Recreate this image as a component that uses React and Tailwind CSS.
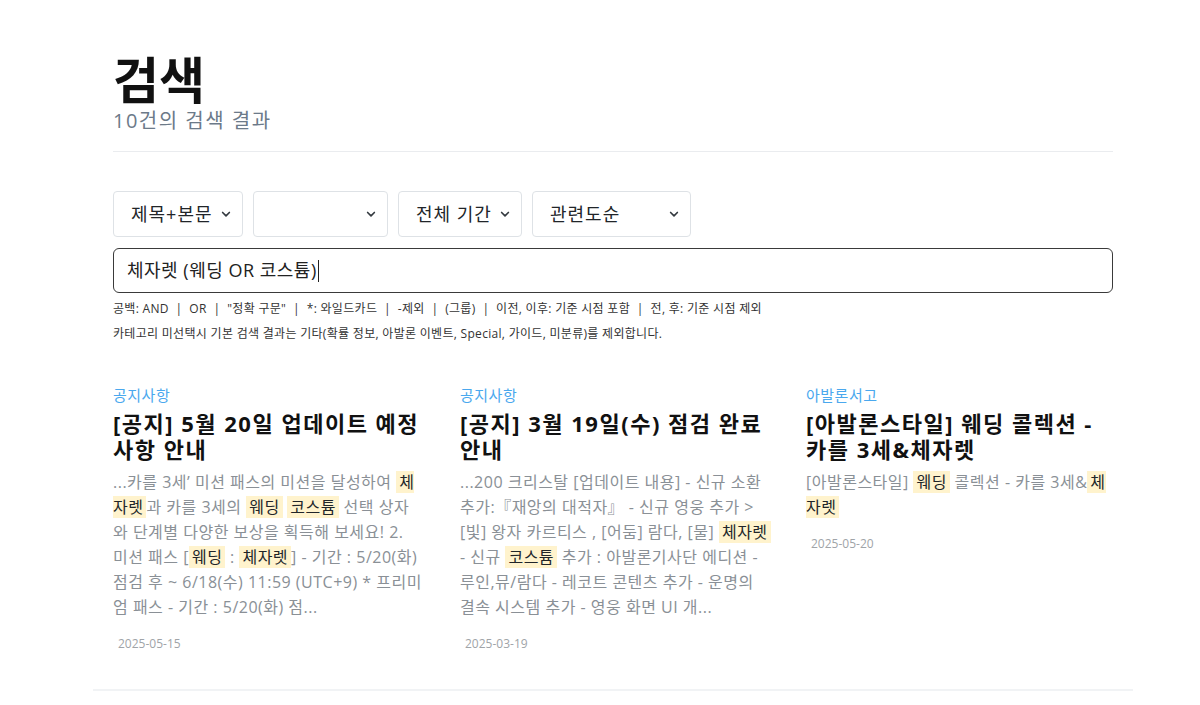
import React from 'react';

const FONT = { fontFamily: '"Open Sans", "Noto Sans CJK KR", sans-serif' };

const results = [
  {
    category: '공지사항',
    title: '[공지] 5월 20일 업데이트 예정 사항 안내',
    excerpt: [
      '...카를 3세’ 미션 패스의 미션을 달성하여 ',
      { m: '체자렛' },
      '과 카를 3세의 ',
      { m: '웨딩' },
      ' ',
      { m: '코스튬' },
      ' 선택 상자와 단계별 다양한 보상을 획득해 보세요! 2. 미션 패스 [',
      { m: '웨딩' },
      ' : ',
      { m: '체자렛' },
      '] - 기간 : 5/20(화) 점검 후 ~ 6/18(수) 11:59 (UTC+9) * 프리미엄 패스 - 기간 : 5/20(화) 점...',
    ],
    date: '2025-05-15',
    width: 'w-[310px]',
  },
  {
    category: '공지사항',
    title: '[공지] 3월 19일(수) 점검 완료 안내',
    excerpt: [
      '...200 크리스탈 [업데이트 내용] - 신규 소환 추가:『재앙의 대적자』 - 신규 영웅 추가 > [빛] 왕자 카르티스 , [어둠] 람다, [물] ',
      { m: '체자렛' },
      ' - 신규 ',
      { m: '코스튬' },
      ' 추가 : 아발론기사단 에디션 - 루인,뮤/람다 - 레코트 콘텐츠 추가 - 운명의 결속 시스템 추가 - 영웅 화면 UI 개...',
    ],
    date: '2025-03-19',
    width: 'w-[311.5px]',
  },
  {
    category: '아발론서고',
    title: '[아발론스타일] 웨딩 콜렉션 - 카를 3세&체자렛',
    excerpt: [
      '[아발론스타일] ',
      { m: '웨딩' },
      ' 콜렉션 - 카를 3세&',
      { m: '체자렛' },
    ],
    date: '2025-05-20',
    width: 'w-[308px]',
  },
];

const Chevron = () => (
  <svg
    className="pointer-events-none absolute right-[11px] top-1/2 -translate-y-1/2"
    width="12"
    height="12"
    viewBox="0 0 16 16"
    fill="none"
    stroke="#343a40"
    strokeWidth="2.2"
    strokeLinecap="round"
    strokeLinejoin="round"
  >
    <path d="M3.5 6l4.5 4.5L12.5 6" />
  </svg>
);

const Select = ({ value, width }) => (
  <div className={`relative ${width}`}>
    <div className="flex h-[46px] items-center rounded-[4px] border border-[#dee2e6] bg-white pl-[17px] text-[18px] tracking-[1px] text-[#212529]">
      {value}
    </div>
    <Chevron />
  </div>
);

const ResultCard = ({ item }) => (
  <div className={item.width}>
    <div className="text-[15px] leading-[22px] tracking-[0.5px] text-[#4aa8ee]">{item.category}</div>
    <h3 className="mt-[4px] text-[22px] font-bold leading-[26px] tracking-[1.5px] text-[#111]">{item.title}</h3>
    <p className="mt-[8px] text-[16px] leading-[25px] tracking-[0.5px] text-[#8a9096]">
      {item.excerpt.map((part, i) =>
        typeof part === 'string' ? (
          <span key={i}>{part}</span>
        ) : (
          <mark key={i} className="bg-[#fff3cd] px-[3px] text-[#212529]">
            {part.m}
          </mark>
        )
      )}
    </p>
    <div className="mt-[15px] pl-[5px] text-[12px] text-[#a0a4a8]">{item.date}</div>
  </div>
);

const App = () => {
  return (
    <div className="min-h-[705px] bg-white" style={FONT}>
      <div className="ml-[93px] w-[1040px]">
        <div className="px-[20px] pt-[46px]">
          <h1 className="pt-[4px] text-[50px] font-bold leading-[60px] text-[#111]">검색</h1>
          <div className="mt-[-3px] text-[20px] leading-[28px] tracking-[1.5px] text-[#6c7a89]">10건의 검색 결과</div>
          <div className="mt-[16px] border-t border-[#eaecef]" />

          <div className="mt-[39px] flex gap-[10px]">
            <Select value="제목+본문" width="w-[130px]" />
            <Select value="" width="w-[135px]" />
            <Select value="전체 기간" width="w-[124px]" />
            <Select value="관련도순" width="w-[159px]" />
          </div>

          <div className="mt-[11px] flex h-[45px] items-center rounded-[6px] border border-[#3a3a3a] px-[13px] text-[18px] tracking-[0.5px] text-[#222]">
            체자렛 (웨딩 OR 코스튬)
            <span className="ml-[1px] inline-block h-[22px] w-px bg-[#222]" />
          </div>

          <div className="mt-[7px] text-[12px] leading-[18px] tracking-[0.3px] text-[#333]">
            공백: AND &nbsp;|&nbsp; OR &nbsp;|&nbsp; "정확 구문" &nbsp;|&nbsp; *: 와일드카드 &nbsp;|&nbsp; -제외 &nbsp;|&nbsp; (그룹) &nbsp;|&nbsp; 이전, 이후: 기준 시점 포함 &nbsp;|&nbsp; 전, 후: 기준 시점 제외
          </div>
          <div className="mt-[7px] text-[12px] leading-[18px] tracking-[0.3px] text-[#333]">
            카테고리 미선택시 기본 검색 결과는 기타(확률 정보, 아발론 이벤트, Special, 가이드, 미분류)를 제외합니다.
          </div>

          <div className="mt-[41px] grid grid-cols-[347px_346px_1fr]">
            {results.map((item, i) => (
              <ResultCard key={i} item={item} />
            ))}
          </div>
        </div>
        <div className="mt-[36px] border-t-2 border-[#f1f3f5]" />
      </div>
    </div>
  );
};

export default App;
